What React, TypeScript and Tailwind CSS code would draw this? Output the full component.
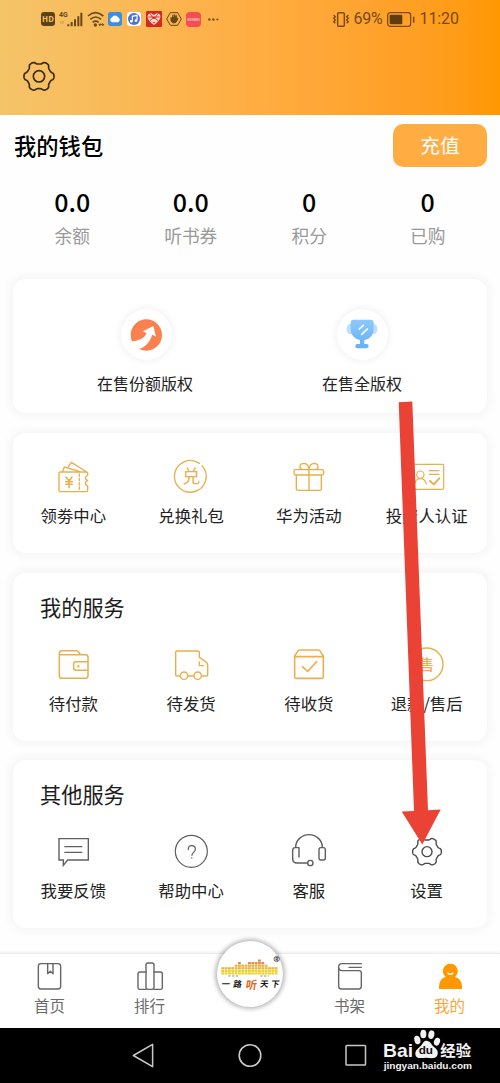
import type { ReactNode } from "react";

const GOLD = "#e8b04c";
const GRAY = "#5f5f5f";

function Icon({ box, color = GOLD, width = 4.2, children }: { box: string; color?: string; width?: number; children: ReactNode }) {
  return (
    <svg viewBox={box} className="block h-[34px] w-[34px] shrink-0 overflow-visible" fill="none" stroke={color} strokeWidth={width} strokeLinecap="round" strokeLinejoin="round">
      {children}
    </svg>
  );
}

function gearPath(cx: number, cy: number, inner: number, outer: number) {
  const mid = (inner + outer) / 2;
  const amp = (outer - inner) / 2;
  const points: string[] = [];
  for (let i = 0; i < 180; i++) {
    const t = (i / 180) * Math.PI * 2;
    const r = mid + (amp * Math.tanh(1.8 * Math.cos(6 * t))) / Math.tanh(1.8);
    points.push(`${(cx + r * Math.cos(t)).toFixed(2)} ${(cy + r * Math.sin(t)).toFixed(2)}`);
  }
  return `M${points.join("L")}Z`;
}

function Item({ label, children }: { label: string; children: ReactNode }) {
  return (
    <div className="flex flex-1 flex-col items-center">
      {children}
      <span className="mt-[9px] whitespace-nowrap text-[16.4px] leading-6 text-[#222]">{label}</span>
    </div>
  );
}

function Stat({ value, label }: { value: string; label: string }) {
  return (
    <div className="flex flex-1 flex-col items-center">
      <span className="text-[25px] font-medium leading-8 text-black">{value}</span>
      <span className="mt-[6px] text-[17.7px] leading-6 text-[#999]">{label}</span>
    </div>
  );
}

function Tab({ label, active = false, children }: { label: string; active?: boolean; children: ReactNode }) {
  return (
    <div className="flex w-[100px] flex-col items-center">
      {children}
      <span className={active ? "mt-[-1.5px] pr-[1px] text-[15.5px] leading-6 text-[#f9a63a]" : "mt-[-1.5px] pr-[1px] text-[15.5px] leading-6 text-[#6b6b6b]"}>{label}</span>
    </div>
  );
}

const card = "mx-[13px] rounded-[13px] bg-white shadow-[0_0_9px_4px_rgba(0,0,0,0.035)]";

function StatusBar() {
  return (
    <div className="flex h-[38px] items-center pl-[41px] text-[#5f4314]">
      <span className="flex h-[14px] w-[14px] items-center justify-center rounded-[3px] bg-[#5c4316] text-[8px] font-bold text-[#f6bf63]">HD</span>
      <svg className="ml-[4px] h-[18px] w-[25px]" viewBox="0 0 75 54" fill="none" stroke="#67491a" strokeWidth="6">
        <text x="0" y="20" fontSize="24" fontWeight="700" fill="#67491a" stroke="none" fontFamily="Roboto, sans-serif" textLength="26" lengthAdjust="spacingAndGlyphs">4G</text>
        <path d="M28 49V43M38 49V36M48 49V28M58 49V19M67 49V8" />
        <path d="M6 33v8M12 33v8" strokeWidth="2" opacity=".5" />
      </svg>
      <svg className="ml-[3px] h-[16px] w-[18px]" viewBox="0 0 54 48" fill="none" stroke="#67491a" strokeWidth="5">
        <path d="M3 15Q25-5 49 15M10 25Q26 11 42 25M17 34Q26 27 35 34" />
        <circle cx="25" cy="42" r="5" fill="#67491a" stroke="none" />
        <path d="M36 41h14M40 37l-4 4 4 4M46 37l4 4-4 4" strokeWidth="3" />
      </svg>
      <svg className="ml-[3px] h-[14px] w-[14px]" viewBox="0 0 42 42">
        <rect width="42" height="42" rx="8" fill="#3e8ee0" />
        <path d="M12 31a8 8 0 0 1 0-15 10 10 0 0 1 18 0 8 8 0 0 1 0 15Z" fill="#fff" />
      </svg>
      <svg className="ml-[5px] h-[14px] w-[14px]" viewBox="0 0 42 42">
        <rect width="42" height="42" rx="9" fill="#fff" />
        <circle cx="21" cy="21" r="18" fill="#4c72d5" />
        <path d="M16 28V13l14-3v15" fill="none" stroke="#fff" strokeWidth="3.5" />
        <circle cx="13" cy="28" r="4" fill="#fff" />
        <circle cx="27" cy="26" r="4" fill="#fff" />
      </svg>
      <svg className="ml-[5px] h-[16px] w-[16px]" viewBox="0 0 48 48">
        <rect width="48" height="48" rx="4" fill="#d6281f" />
        <path d="M24 42C12 34 4 24 5 15c2-10 14-9 19-3 5-6 17-7 19 3 1 9-7 19-19 27Z" fill="#f8d9cf" />
        <path d="M7 18h34M13 10l11 14 11-14M12 29l12-11 12 11M20 35h8" fill="none" stroke="#d6281f" strokeWidth="2.8" />
      </svg>
      <svg className="ml-[4px] h-[16px] w-[16px]" viewBox="0 0 48 48">
        <path d="M13 5h22l11 19-11 19H13L2 24Z" fill="none" stroke="#67491a" strokeWidth="3" />
        <path d="M15 20v10q3 6 9 6 7 0 10-9l2-6-5 3V15" fill="#67491a" stroke="#67491a" strokeWidth="3" strokeLinecap="round" />
        <path d="M20 25V13M25 25V11M30 25V13" fill="none" stroke="#67491a" strokeWidth="3.500" strokeLinecap="round" />
      </svg>
      <span className="ml-[4px] flex h-[15px] w-[15px] items-center justify-center rounded-[4px] bg-[#f44e54]">
        <svg className="h-[15px] w-[15px]" viewBox="0 0 15 15"><text x="1.2" y="8.8" fontSize="3" fontWeight="700" fill="#ffd9d4" textLength="12.6">HUAWEI</text></svg>
      </span>
      <svg className="ml-[7px] h-[3px] w-[11px]" viewBox="0 0 11 3" fill="#75501a"><circle cx="1.4" cy="1.5" r="1.2" /><circle cx="5.4" cy="1.5" r="1.2" /><circle cx="9.4" cy="1.5" r="1.1" /></svg>
      <svg className="ml-[113px] h-[15px] w-[18px]" viewBox="0 0 54 45" fill="none" stroke="#7b4b0e" strokeWidth="4.4">
        <rect x="17" y="2.500" width="20" height="40" rx="3" />
        <path d="M5 9l5 5-5 5 5 5-5 5 5 5M49 9l-5 5 5 5-5 5 5 5-5 5" strokeWidth="4" />
      </svg>
      <span className="ml-[3.500px] w-[30px] font-[Roboto,sans-serif] text-[16px] tracking-[-0.3px] text-[#764a10]">69%</span>
      <svg className="ml-[3px] h-[15px] w-[28px]" viewBox="0 0 84 45" fill="none" stroke="#7b4b0e" strokeWidth="3.8">
        <rect x="2" y="2" width="69" height="41" rx="8" />
        <rect x="8" y="8" width="38" height="29" rx="3" fill="#5f3c0d" stroke="none" />
        <path d="M80 14v18" strokeWidth="4.5" />
      </svg>
      <span className="ml-[5px] font-[Roboto,sans-serif] text-[16px] tracking-[-0.1px] text-[#764a10]">11:20</span>
    </div>
  );
}

const barHeights = [3, 3, 3, 3, 4, 5, 4, 4, 5, 5, 5, 6, 5, 4, 3, 3, 3];

function Logo() {
  return (
    <div className="mt-[-12px] h-[66px] w-[66px] rounded-full bg-white shadow-[0_0_4px_2px_rgba(0,0,0,0.28)]">
      <svg viewBox="650 33 198 198" className="h-full w-full">
        {barHeights.map((n, i) =>
          Array.from({ length: n }, (_, k) => (
            <rect key={`${i}-${k}`} x={663 + i * 10} y={127 - k * 7.7} width="8.6" height="6.6" fill={k < 2 ? "#ead32d" : k < 4 ? "#e7b63d" : "#e48a4d"} />
          )),
        )}
        <path d="M684 138h32M780 138h25" stroke="#bdb9a0" strokeWidth="4" strokeDasharray="7 4" />
        <circle cx="829" cy="87" r="8" fill="none" stroke="#333" strokeWidth="2" />
        <text x="824.5" y="92" fontSize="13" fontWeight="700" fill="#222">R</text>
        <g fontFamily="'Noto Sans CJK SC', sans-serif" fontWeight="700" fill="#171411" fontSize="25">
          <text transform="translate(663 172) skewX(-8)">一</text>
          <text transform="translate(698 172) skewX(-8)">路</text>
          <text transform="translate(735 177) skewX(-8)" fontSize="34" fill="#dc6b22">听</text>
          <text transform="translate(778 172) skewX(-8)">天</text>
          <text transform="translate(811 172) skewX(-8)">下</text>
        </g>
      </svg>
    </div>
  );
}

function Watermark() {
  return (
    <svg className="absolute left-[380px] top-[1028px] h-[45px] w-[98px]" viewBox="300 294 294 135" fill="#f2f2f2">
      <text x="309" y="380" fontSize="57" fontWeight="700" fontFamily="'Liberation Sans', sans-serif" textLength="90" lengthAdjust="spacingAndGlyphs">Bai</text>
      <ellipse cx="412" cy="330" rx="9" ry="13" transform="rotate(-14 412 330)" />
      <ellipse cx="430" cy="312" rx="9" ry="13" />
      <ellipse cx="454" cy="314" rx="9" ry="13" transform="rotate(12 454 314)" />
      <ellipse cx="471" cy="335" rx="9" ry="12" transform="rotate(18 471 335)" />
      <path d="M439 332c12 0 15 12 22 18 10 7 14 14 12 23-4 16-20 11-35 10-16 2-31 4-32-12 0-12 10-17 17-24 6-7 7-15 16-15Z" />
      <text x="416" y="373" fontSize="32" fontWeight="700" fill="#111" fontFamily="'Liberation Sans', sans-serif" textLength="43" lengthAdjust="spacingAndGlyphs">du</text>
      <text x="481" y="378" fontSize="46" fontWeight="700" fontFamily="'Noto Sans CJK SC', sans-serif" textLength="92">经验</text>
      <text x="311" y="416" fontSize="28" fontWeight="700" fontFamily="'Liberation Sans', sans-serif" textLength="265" lengthAdjust="spacingAndGlyphs">jingyan.baidu.com</text>
    </svg>
  );
}

export default function App() {
  return (
    <div className="relative flex h-[1083px] w-[500px] flex-col overflow-hidden bg-[#fefefe] font-['Noto_Sans_CJK_SC',sans-serif]">
      <header className="h-[115px] shrink-0 bg-linear-to-r from-[#f4c468] via-[#ffad43] to-[#ff9800]">
        <StatusBar />
        <svg viewBox="66 177 102 102" className="ml-[22px] mt-[21px] h-[34px] w-[34px]" fill="none" stroke="#3a2a12" strokeWidth="5">
          <path d={gearPath(117, 229, 37, 45)} />
          <circle cx="117" cy="229" r="17" />
        </svg>
      </header>

      <div className="flex h-[62px] shrink-0 items-center justify-between pl-[14px] pr-[13px]">
        <h1 className="text-[22.3px] font-medium text-black">我的钱包</h1>
        <button className="mt-[-2px] h-[43px] w-[94px] rounded-[10px] bg-[#ffad43] text-[19.7px] text-white">充值</button>
      </div>
      <div className="mx-[13px] mt-[7.500px] flex h-[94.500px] shrink-0">
        <Stat value="0.0" label="余额" />
        <Stat value="0.0" label="听书券" />
        <Stat value="0" label="积分" />
        <Stat value="0" label="已购" />
      </div>

      <section className={`${card} flex h-[134px] shrink-0 pl-[25px] pr-[17px] pt-[30px]`}>
        <div className="flex flex-1 flex-col items-center">
          <div className="flex h-[51px] w-[51px] items-center justify-center rounded-full bg-white shadow-[0_0_6px_2px_rgba(0,0,0,0.05)]">
            <svg viewBox="390 146 102 102" className="h-[34px] w-[34px]">
              <circle cx="442" cy="197" r="47" fill="#f9804f" />
              <path d="M390 216Q430 218 443 192L432 186 463 170 471 202 460 196Q445 238 411 240L390 248Z" fill="#fff" />
            </svg>
          </div>
          <span className="mt-[10.500px] pr-[2px] text-[16px] leading-6 text-[#222]">在售份额版权</span>
        </div>
        <div className="flex flex-1 flex-col items-center">
          <div className="flex h-[51px] w-[51px] items-center justify-center rounded-full bg-white shadow-[0_0_6px_2px_rgba(0,0,0,0.05)]">
            <svg viewBox="1036 146 102 102" className="h-[34px] w-[34px]">
              <defs>
                <linearGradient id="cup" x1="0" y1="0" x2="0" y2="1"><stop stopColor="#8dc8fb" /><stop offset="1" stopColor="#63b2f8" /></linearGradient>
              </defs>
              <rect x="1041" y="163" width="92" height="32" rx="13" fill="#bcdffb" />
              <path d="M1062 151h51q9 0 9 9v18q0 29-28 34v12h7q6 0 6 6t-6 7h-28q-6 0-6-7t6-6h8v-12q-28-6-28-34v-18q0-9 9-9Z" fill="url(#cup)" />
              <path d="M1079 179l12-11M1086 195l17-16" stroke="#fff" strokeWidth="5" strokeLinecap="round" />
            </svg>
          </div>
          <span className="mt-[10.500px] text-[16px] leading-6 text-[#222]">在售全版权</span>
        </div>
      </section>

      <section className={`${card} mt-[20px] flex h-[120px] shrink-0 px-[1.5px] pt-[27px]`}>
        <Item label="领劵中心">
          <Icon box="169 90 102 102">
            <path d="M182 126h79q3 0 3 4v6q-7 3-7 8t7 7q-7 4-7 9t7 8v12q0 5-4 5h-78q-4 0-4-4v-51q0-4 4-4ZM189 124l5-13 45 13M206 110l9-13 42 26M239 132v7M239 145v7M239 158v7M239 171v7" />
            <path d="M199 141l9 12 9-12M208 153v20M198 155h20M198 163h20" strokeWidth="4.5" />
          </Icon>
        </Item>
        <Item label="兑换礼包">
          <Icon box="522 90 102 102" width={4}>
            <path d="M606 107A47.500 47.500 0 1 1 598 100" />
            <text x="547" y="160" fontSize="54" fill={GOLD} stroke="none" fontFamily="'Noto Sans CJK SC', sans-serif">兑</text>
          </Icon>
        </Item>
        <Item label="华为活动">
          <Icon box="126 210 102 102">
            <rect x="132" y="239" width="89" height="16" rx="5" />
            <path d="M139 256v40q0 5 5 5h65q5 0 5-5v-40M177 240v60M177 238q-2-17-15-18-12 0-12 10 0 8 8 8M177 238q2-17 15-18 12 0 12 10 0 8-8 8" />
          </Icon>
        </Item>
        <Item label="投资人认证">
          <Icon box="479 210 102 102" width={3.6}>
            <rect x="482" y="223" width="98" height="75" rx="4" />
            <circle cx="510" cy="254" r="11" />
            <path d="M493 282q3-16 17-16t18 16M537 242h29M537 253h29" />
            <path d="M539 273l11 10 17-18" strokeWidth="6" />
          </Icon>
        </Item>
      </section>

      <section className={`${card} mt-[20px] h-[168px] shrink-0 pt-[19px]`}>
        <h2 className="ml-[27px] h-[32px] text-[21.2px] font-normal leading-[30px] text-[#1d1d1d]">我的服务</h2>
        <div className="mt-[24px] flex px-[1.5px]">
          <Item label="待付款">
            <Icon box="169 234 102 102" width={4.6}>
              <path d="M179 254h79q7 0 7 7v56q0 8-8 8h-70q-8 0-8-8v-67q0-8 8-8h43q4 0 7 4l5 7M264 275h-36q-6 0-6 6v14q0 6 6 6h36" />
              <circle cx="236" cy="289" r="1.500" />
            </Icon>
          </Item>
          <Item label="待发货">
            <Icon box="522 234 102 102">
              <path d="M540 318h-10q-3 0-3-3v-68q0-4 4-4h63q4 0 4 4v15l18 12q7 5 7 12v28q0 4-4 4h-14M564 318h17M598 276v11h12" />
              <circle cx="552" cy="317" r="11" />
              <circle cx="593" cy="317" r="11" />
            </Icon>
          </Item>
          <Item label="待收货">
            <Icon box="126 234 102 102" width={4.8}>
              <path d="M134 259v61q0 5 5 5h76q5 0 5-5v-61M134 260h86M134 258l9-14q2-4 6-4h56q4 0 6 4l9 14M157 290l16 14 27-29" stroke="#eeae50" />
            </Icon>
          </Item>
          <Item label="退款/售后">
            <Icon box="479 234 102 102">
              <circle cx="529" cy="283" r="49" />
              <text x="505" y="300" fontSize="46" fontWeight="500" fill="#eeae50" stroke="none" fontFamily="'Noto Sans CJK SC', sans-serif">售</text>
            </Icon>
          </Item>
        </div>
      </section>

      <section className={`${card} mt-[19px] h-[168px] shrink-0 pt-[19px]`}>
        <h2 className="ml-[27px] h-[32px] text-[21.2px] font-normal leading-[30px] text-[#1d1d1d]">其他服务</h2>
        <div className="mt-[24px] flex px-[1.5px]">
          <Item label="我要反馈">
            <Icon box="169 225 102 102" color={GRAY}>
              <path d="M178 236h88v64h-62l-13 16v-16h-13ZM194 260h54M194 277h54" strokeLinecap="butt" strokeLinejoin="miter" />
            </Icon>
          </Item>
          <Item label="帮助中心">
            <Icon box="522 225 102 102" color={GRAY} width={3.6}>
              <circle cx="574" cy="274" r="48" />
              <path d="M565 269q-1-12 10-12t11 10q0 5-5 10t-5 7v2M575.500 293v1" />
            </Icon>
          </Item>
          <Item label="客服">
            <Icon box="126 225 102 102" color={GRAY}>
              <path d="M137 262a40 38 0 0 1 80 0M128 297q0 12 14 12h31" />
              <path d="M128 297v-26q0-8 8-8h11v28" />
              <rect x="207" y="263" width="19" height="37" rx="6" />
              <circle cx="181" cy="309" r="8" />
            </Icon>
          </Item>
          <Item label="设置">
            <Icon box="479 225 102 102" color="#4b4b4b">
              <path d={gearPath(530, 275, 35, 43)} />
              <circle cx="530" cy="275" r="15" />
            </Icon>
          </Item>
        </div>
      </section>

      <nav className="relative mt-[25px] flex h-[75px] shrink-0 border-t border-[#ececec] bg-white pt-[6px] shadow-[0_-1px_3px_rgba(0,0,0,0.06)]">
        <Tab label="首页">
          <Icon box="99 90 102 102" color="#666">
            <rect x="115" y="101" width="67" height="76" rx="8" />
            <path d="M143 102v29l8-7 8 7v-29" />
          </Icon>
        </Tab>
        <Tab label="排行">
          <Icon box="399 90 102 102" color="#666">
            <path d="M438 178h-19q-5 0-5-5v-41q0-6 6-6h18M462 126h19q6 0 6 6v41q0 5-5 5h-20" />
            <rect x="438" y="99" width="24" height="79" rx="6" />
          </Icon>
        </Tab>
        <div className="flex w-[100px] justify-center">
          <div className="mt-[-7px]"><Logo /></div>
        </div>
        <Tab label="书架">
          <Icon box="159 90 102 102" color="#666">
            <path d="M244 101h-58q-10 0-10 10t10 11h51q7 0 7 7v40q0 8-8 8h-52q-8 0-8-8v-58M207 112h37" />
          </Icon>
        </Tab>
        <Tab label="我的" active>
          <Icon box="459 90 102 102" color="#ff9800">
            <path d="M511 101a22 22 0 0 0-14 39q-20 6-20 30v7h69v-7q0-24-21-30a22 22 0 0 0-14-39Z" fill="#ff9800" stroke="none" />
            <path d="M503 129q8 8 16 0" stroke="#fff" strokeWidth="3.500" />
          </Icon>
        </Tab>
      </nav>

      <div className="grid h-[55px] shrink-0 grid-cols-[90px_106.500px_107px_105px_auto] items-center bg-black">
        <span />
        <svg viewBox="390 336 80 80" className="h-[27px] w-[27px] justify-self-center" fill="none" stroke="#c9c9c9" strokeWidth="4.500" strokeLinejoin="round"><path d="M457 343v66l-57-33Z" /></svg>
        <svg viewBox="0 0 26 26" className="h-[26px] w-[26px] justify-self-center" fill="none" stroke="#c9c9c9" strokeWidth="1.600"><circle cx="13" cy="12.500" r="10.800" /></svg>
        <svg viewBox="0 0 26 26" className="h-[26px] w-[26px] justify-self-center" fill="none" stroke="#c9c9c9" strokeWidth="1.500"><rect x="3" y="2.500" width="19.500" height="19.500" rx=".8" /></svg>
      </div>

      <Watermark />
      <svg className="absolute left-[390px] top-[395px] h-[455px] w-[60px]" viewBox="390 395 60 455">
        <path d="M398.700 402.200L412.300 401.500 428 810.300 440.700 809.600 422.300 844.500 401.700 811.500 414 811Z" fill="#ea4335" />
      </svg>
    </div>
  );
}
